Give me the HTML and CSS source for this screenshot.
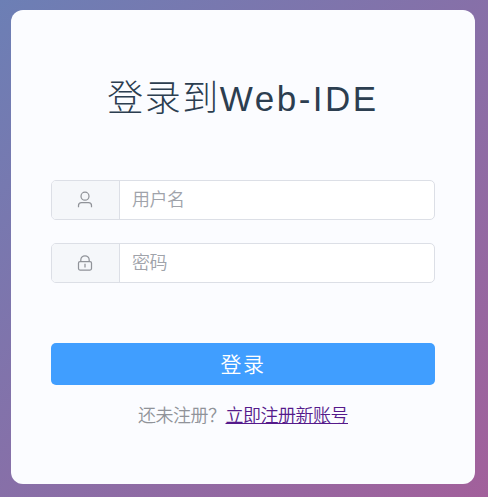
FILE: index.html
```html
<!DOCTYPE html>
<html lang="zh-CN">
<head>
<meta charset="utf-8">
<title>Web-IDE</title>
<link rel="stylesheet" href="styles.css">
</head>
<body>
<main class="card">
  <h1 class="title">登录到<span class="brand">Web-IDE</span></h1>
  <form class="form">
    <label class="field">
      <span class="prepend">
        <svg class="icon" viewBox="0 0 18 18"><circle cx="9" cy="5.2" r="4"/><path d="M2.5 16.3V14.5Q2.5 11.5 5.5 11.5H12.5Q15.5 11.5 15.5 14.5V16.3"/></svg>
      </span>
      <input class="input" type="text" placeholder="用户名">
    </label>
    <label class="field">
      <span class="prepend">
        <svg class="icon" viewBox="0 0 18 18"><rect x="2.5" y="7.5" width="13" height="8.5" rx="1.5"/><path d="M4.8 7.5V6A4.2 4.2 0 0 1 13.2 6V7.5M9 9.7V13.5"/></svg>
      </span>
      <input class="input" type="password" placeholder="密码">
    </label>
    <button class="submit" type="button">登录</button>
  </form>
  <p class="register"><span>还未注册？</span><a class="link" href="#">立即注册新账号</a></p>
</main>
</body>
</html>
```
FILE: styles.css
```css
* { box-sizing: border-box; }
body {
  margin: 0;
  height: 497px;
  padding: 10px 13px 13px 11px;
  overflow: hidden;
  background: linear-gradient(135deg, #6c7fb5 0%, #a2609b 100%);
  font-family: "Liberation Sans", "Noto Sans CJK SC", sans-serif;
  font-weight: 350;
}
.card {
  height: 474px;
  padding: 62px 40px 0;
  border-radius: 12px;
  background: #fbfcff;
}
.title {
  margin: 0;
  height: 54px;
  line-height: 54px;
  text-align: center;
  white-space: nowrap;
  font-size: 36px;
  font-weight: 300;
  letter-spacing: 1.5px;
  color: #2c3e50;
}
.brand { font-size: 35px; letter-spacing: 2.5px; }
.form {
  display: flex;
  flex-direction: column;
  margin-top: 54px;
}
.field {
  display: flex;
  height: 40px;
  margin-bottom: 23px;
  border: 1px solid #dcdfe6;
  border-radius: 5px;
  background: #fff;
  overflow: hidden;
}
.prepend {
  display: flex;
  align-items: center;
  justify-content: center;
  width: 68px;
  padding-right: 1px;
  border-right: 1px solid #dcdfe6;
  background: #f5f7fa;
}
.icon {
  width: 18px;
  height: 18px;
  fill: none;
  stroke: #909399;
  stroke-width: 1.25;
}
.input {
  flex: 1;
  min-width: 0;
  padding: 0 12px;
  border: 0;
  outline: 0;
  background: transparent;
  font: inherit;
  font-size: 18px;
  letter-spacing: -0.5px;
}
.input::placeholder { color: #a0a3aa; opacity: 1; }
.submit {
  height: 42px;
  margin-top: 37px;
  padding: 0 0 2px;
  border: 0;
  border-radius: 5px;
  background: #409eff;
  color: #fff;
  font: inherit;
  font-size: 21px;
  letter-spacing: 1.5px;
}
.register {
  display: flex;
  justify-content: center;
  margin: 18px 0 0;
  line-height: 27px;
  font-size: 18px;
  letter-spacing: -0.5px;
  color: #909399;
}
.link { color: #551a8b; }
```
